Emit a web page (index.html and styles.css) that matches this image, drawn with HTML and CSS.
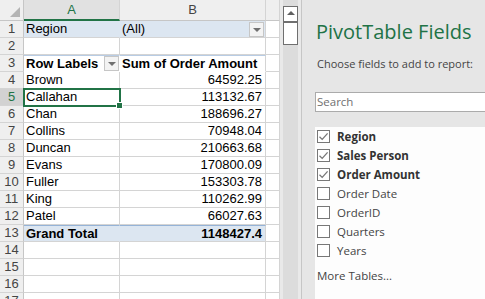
FILE: index.html
```html
<!DOCTYPE html>
<html lang="en">
<head>
    <meta charset="UTF-8">
    <title>PivotTable</title>
    <link rel="stylesheet" href="styles.css">
</head>
<body>
    <div class="window">
        <div class="sheet">
            <div class="row head-row">
                <div class="rh corner"><span class="tri"></span></div>
                <div class="ch active">A</div>
                <div class="ch">B</div>
                <div class="ch"></div>
            </div>
            <div class="row">
                <div class="rh">1</div>
                <div class="c filter">Region</div>
                <div class="c filter">(All)<span class="dd"></span></div>
                <div class="c"></div>
            </div>
            <div class="row">
                <div class="rh">2</div>
                <div class="c"></div>
                <div class="c"></div>
                <div class="c"></div>
            </div>
            <div class="row">
                <div class="rh">3</div>
                <div class="c hdr">Row Labels<span class="dd"></span></div>
                <div class="c hdr">Sum of Order Amount</div>
                <div class="c"></div>
            </div>
            <div class="row"><div class="rh">4</div><div class="c">Brown</div><div class="c num">64592.25</div><div class="c"></div></div>
            <div class="row"><div class="rh sel-rh">5</div><div class="c sel">Callahan</div><div class="c num">113132.67</div><div class="c"></div></div>
            <div class="row"><div class="rh">6</div><div class="c">Chan</div><div class="c num">188696.27</div><div class="c"></div></div>
            <div class="row"><div class="rh">7</div><div class="c">Collins</div><div class="c num">70948.04</div><div class="c"></div></div>
            <div class="row"><div class="rh">8</div><div class="c">Duncan</div><div class="c num">210663.68</div><div class="c"></div></div>
            <div class="row"><div class="rh">9</div><div class="c">Evans</div><div class="c num">170800.09</div><div class="c"></div></div>
            <div class="row"><div class="rh">10</div><div class="c">Fuller</div><div class="c num">153303.78</div><div class="c"></div></div>
            <div class="row"><div class="rh">11</div><div class="c">King</div><div class="c num">110262.99</div><div class="c"></div></div>
            <div class="row"><div class="rh">12</div><div class="c">Patel</div><div class="c num">66027.63</div><div class="c"></div></div>
            <div class="row">
                <div class="rh">13</div>
                <div class="c total">Grand Total</div>
                <div class="c total num">1148427.4</div>
                <div class="c"></div>
            </div>
            <div class="row"><div class="rh">14</div><div class="c"></div><div class="c"></div><div class="c"></div></div>
            <div class="row"><div class="rh">15</div><div class="c"></div><div class="c"></div><div class="c"></div></div>
            <div class="row"><div class="rh">16</div><div class="c"></div><div class="c"></div><div class="c"></div></div>
            <div class="row"><div class="rh">17</div><div class="c"></div><div class="c"></div><div class="c"></div></div>
        </div>

        <div class="vscroll">
            <div class="arrow-up"><span></span></div>
            <div class="thumb"></div>
        </div>

        <div class="pane">
            <h1 class="pane-title">PivotTable Fields</h1>
            <p class="pane-hint">Choose fields to add to report:</p>
            <div class="search">Search</div>
            <div class="field-list">
                <ul class="fields">
                    <li class="on"><span class="box"><svg viewBox="0 0 13 13" width="13" height="13"><path d="M2.5 6.8 L5.2 9.4 L10.6 3.4" fill="none" stroke="#777" stroke-width="1.3"/></svg></span>Region</li>
                    <li class="on"><span class="box"><svg viewBox="0 0 13 13" width="13" height="13"><path d="M2.5 6.8 L5.2 9.4 L10.6 3.4" fill="none" stroke="#777" stroke-width="1.3"/></svg></span>Sales Person</li>
                    <li class="on"><span class="box"><svg viewBox="0 0 13 13" width="13" height="13"><path d="M2.5 6.8 L5.2 9.4 L10.6 3.4" fill="none" stroke="#777" stroke-width="1.3"/></svg></span>Order Amount</li>
                    <li><span class="box"></span>Order Date</li>
                    <li><span class="box"></span>OrderID</li>
                    <li><span class="box"></span>Quarters</li>
                    <li><span class="box"></span>Years</li>
                </ul>
                <p class="more">More Tables...</p>
            </div>
        </div>
    </div>
</body>
</html>
```

FILE: styles.css
```css
body {
    margin: 0;
    font-family: 'Liberation Sans', Arial, sans-serif;
    background: #fff;
}
.window {
    display: flex;
    width: 485px;
    height: 299px;
    overflow: hidden;
}
.sheet {
    width: 280px;
    flex: none;
    background: #fff;
}
.row {
    display: grid;
    grid-template-columns: 24px 96px 146px 14px;
    height: 17px;
}
.head-row {
    height: 21px;
}
.rh, .ch, .c {
    box-sizing: border-box;
    border-right: 1px solid #d4d4d4;
    border-bottom: 1px solid #d4d4d4;
    font-size: 13px;
    line-height: 16px;
    white-space: nowrap;
    overflow: hidden;
}
.rh {
    background: #efefef;
    border-right-color: #c6c6c6;
    color: #444;
    text-align: center;
    font-size: 13px;
}
.sel-rh {
    background: #d2d2d2;
    color: #217346;
}
.ch {
    background: #efefef;
    border-bottom-color: #c6c6c6;
    color: #444;
    text-align: center;
    line-height: 20px;
    font-size: 13px;
}
.ch.active {
    background: #e1e1e1;
    color: #217346;
    border-bottom: 2px solid #217346;
}
.corner {
    position: relative;
    border-bottom-color: #c6c6c6;
}
.tri {
    position: absolute;
    right: 3px;
    bottom: 3px;
    width: 0;
    height: 0;
    border-left: 10px solid transparent;
    border-bottom: 10px solid #b4b4b4;
}
.c {
    color: #000;
    padding: 0 2px;
}
.num {
    text-align: right;
    padding-right: 3px;
}
.filter {
    background: #dce6f1;
    border-right-color: #dce6f1;
    position: relative;
}
.filter + .filter {
    border-right-color: #d4d4d4;
}
.hdr {
    font-weight: bold;
    position: relative;
    border-top: 1px solid #b8cce4;
    line-height: 15px;
    border-bottom-color: #fff;
    border-right-color: #fff;
}
.hdr + .hdr {
    border-right-color: #d4d4d4;
}
.dd {
    position: absolute;
    right: 1px;
    top: 1px;
    width: 15px;
    height: 15px;
    box-sizing: border-box;
    background: #f3f3f3;
    border: 1px solid #c6c6c6;
}
.hdr .dd {
    top: 0;
    right: 0;
    height: 15px;
}
.dd::after {
    content: '';
    position: absolute;
    left: 3px;
    top: 5px;
    border-left: 4px solid transparent;
    border-right: 4px solid transparent;
    border-top: 4px solid #707070;
}
.total {
    background: #dce6f1;
    font-weight: bold;
    border-top: 1px solid #95b3d7;
    line-height: 15px;
    border-right-color: #dce6f1;
}
.total + .total {
    border-right-color: #d4d4d4;
}
.sel {
    position: relative;
    overflow: visible;
    outline: 2px solid #217346;
    outline-offset: -1px;
    z-index: 1;
}
.sel::after {
    content: '';
    position: absolute;
    right: -4px;
    bottom: -4px;
    width: 5px;
    height: 5px;
    background: #217346;
    border: 1px solid #fff;
}
.vscroll {
    width: 21px;
    flex: none;
    box-sizing: border-box;
    background: #dcdcdc;
    border-left: 3px solid #e9e9e9;
    border-right: 3px solid #e9e9e9;
    padding-top: 6px;
}
.arrow-up {
    height: 15px;
    box-sizing: border-box;
    background: #fff;
    border: 1px solid #6f6f6f;
    border-bottom: none;
    position: relative;
}
.arrow-up span {
    position: absolute;
    left: 3px;
    top: 4px;
    border-left: 4px solid transparent;
    border-right: 4px solid transparent;
    border-bottom: 4px solid #606060;
}
.thumb {
    height: 24px;
    box-sizing: border-box;
    background: #fff;
    border: 1px solid #6f6f6f;
    border-top: 2px solid #6f6f6f;
}
.pane {
    flex: 1;
    display: flex;
    flex-direction: column;
    background: #e6e6e6;
    border-left: 1px solid #c6c6c6;
    padding-left: 13px;
    font-family: 'Open Sans', 'Noto Sans', sans-serif;
}
.pane-title {
    margin: 19px 0 0 1px;
    font-size: 20px;
    font-weight: normal;
    color: #217346;
    line-height: 26px;
}
.pane-hint {
    margin: 11px 0 0 2px;
    font-size: 11px;
    color: #444;
    line-height: 16px;
}
.search {
    margin-top: 20px;
    height: 20px;
    flex: none;
    box-sizing: border-box;
    background: #fff;
    border: 1px solid #ababab;
    border-right: none;
    font-size: 11.5px;
    color: #707070;
    line-height: 18px;
    padding-left: 1px;
}
.field-list {
    flex: 1;
    margin-top: 15px;
    padding-left: 2px;
    background: #fdfdfd;
}
.fields {
    list-style: none;
    margin: 0;
    padding: 0;
}
.fields li {
    display: flex;
    align-items: center;
    height: 19px;
    font-size: 11.5px;
    color: #444;
}
.fields li.on {
    font-weight: bold;
    color: #333;
}
.box {
    width: 13px;
    height: 13px;
    box-sizing: border-box;
    border: 1px solid #777;
    background: #fff;
    margin-right: 7px;
    flex: none;
    position: relative;
}
.box svg {
    position: absolute;
    left: -1px;
    top: -1px;
}
.more {
    margin: 8px 0 0;
    font-size: 11.5px;
    line-height: 16px;
    color: #444;
}
```
